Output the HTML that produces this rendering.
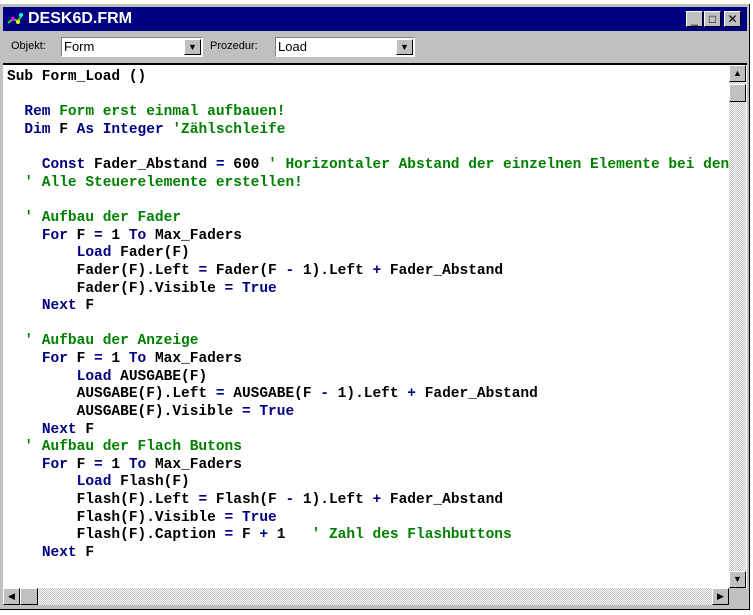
<!DOCTYPE html>
<html><head><meta charset="utf-8"><style>
body{margin:0;width:753px;height:615px;background:#fff;position:relative;overflow:hidden;font-family:"Liberation Sans",sans-serif}
.win{position:absolute;left:0;top:4px;width:750px;height:606px;background:#c0c0c0;border-right:1px solid #000;border-bottom:1px solid #000;box-sizing:border-box}
.title{position:absolute;left:3px;top:3px;width:744px;height:24px;background:#000080;color:#fff;font-weight:bold;font-size:16px;line-height:24px}
.title span{position:absolute;left:25px}
.btn{position:absolute;top:4px;width:17px;height:16px;background:#c0c0c0;border:1px solid;border-color:#fff #000 #000 #fff;box-sizing:border-box;color:#000;font-size:12px;line-height:14px;text-align:center;font-weight:normal}
.lbl{position:absolute;top:36px;font-size:11px;color:#000}
.combo{position:absolute;top:33px;height:20px;background:#fff;border:1px solid;border-color:#808080 #fff #fff #808080;box-sizing:border-box;font-size:13px;line-height:18px;padding-left:2px}
.combo .dd{position:absolute;right:1px;top:1px;width:17px;height:16px;background:#c0c0c0;border:1px solid;border-color:#fff #000 #000 #fff;box-sizing:border-box;font-size:9px;line-height:14px;text-align:center}
.code{position:absolute;left:3px;top:59px;width:744px;height:525px;background:#fff;border-top:2px solid #000;box-sizing:border-box}
pre{margin:0;position:absolute;left:4px;top:4px;font-family:"Liberation Mono",monospace;font-weight:bold;font-size:14.5px;line-height:17.63px;color:#000}
.k{color:#000080}.c{color:#008000}
.vs{position:absolute;left:729px;top:61px;width:17px;height:523px;background:repeating-conic-gradient(#c0c0c0 0 25%,#fff 0 50%) 0 0/2px 2px}
.hs{position:absolute;left:3px;top:584px;width:726px;height:17px;background:repeating-conic-gradient(#c0c0c0 0 25%,#fff 0 50%) 0 0/2px 2px}
.sb{position:absolute;width:17px;height:17px;background:#c0c0c0;border:1px solid;border-color:#fff #000 #000 #fff;box-sizing:border-box;font-size:9px;line-height:15px;text-align:center}
</style></head><body>
<div class="win">
<div class="title"><svg style="position:absolute;left:3px;top:4px" width="18" height="16"><path d="M2 12 L7 8 L12 10 L16 4" stroke="#0f0" stroke-width="2" fill="none"/><circle cx="7" cy="8" r="2" fill="#f0f"/><circle cx="12" cy="11" r="2" fill="#ff0"/><circle cx="15" cy="4" r="2" fill="#0ff"/></svg><span>DESK6D.FRM</span>
<div class="btn" style="left:683px">_</div><div class="btn" style="left:701px">□</div><div class="btn" style="left:721px">✕</div></div>
<div class="lbl" style="left:11px">Objekt:</div>
<div class="combo" style="left:61px;width:142px">Form<div class="dd">▼</div></div>
<div class="lbl" style="left:210px">Prozedur:</div>
<div class="combo" style="left:275px;width:140px">Load<div class="dd">▼</div></div>
<div class="code"><pre>Sub Form_Load ()

  <span class="k">Rem</span> <span class="c">Form erst einmal aufbauen!</span>
  <span class="k">Dim</span> F <span class="k">As</span> <span class="k">Integer</span> <span class="c">'Zählschleife</span>

    <span class="k">Const</span> Fader_Abstand <span class="k">=</span> 600 <span class="c">' Horizontaler Abstand der einzelnen Elemente bei den</span>
  <span class="c">' Alle Steuerelemente erstellen!</span>

  <span class="c">' Aufbau der Fader</span>
    <span class="k">For</span> F <span class="k">=</span> 1 <span class="k">To</span> Max_Faders
        <span class="k">Load</span> Fader(F)
        Fader(F).Left <span class="k">=</span> Fader(F <span class="k">-</span> 1).Left <span class="k">+</span> Fader_Abstand
        Fader(F).Visible <span class="k">=</span> <span class="k">True</span>
    <span class="k">Next</span> F

  <span class="c">' Aufbau der Anzeige</span>
    <span class="k">For</span> F <span class="k">=</span> 1 <span class="k">To</span> Max_Faders
        <span class="k">Load</span> AUSGABE(F)
        AUSGABE(F).Left <span class="k">=</span> AUSGABE(F <span class="k">-</span> 1).Left <span class="k">+</span> Fader_Abstand
        AUSGABE(F).Visible <span class="k">=</span> <span class="k">True</span>
    <span class="k">Next</span> F
  <span class="c">' Aufbau der Flach Butons</span>
    <span class="k">For</span> F <span class="k">=</span> 1 <span class="k">To</span> Max_Faders
        <span class="k">Load</span> Flash(F)
        Flash(F).Left <span class="k">=</span> Flash(F <span class="k">-</span> 1).Left <span class="k">+</span> Fader_Abstand
        Flash(F).Visible <span class="k">=</span> <span class="k">True</span>
        Flash(F).Caption <span class="k">=</span> F <span class="k">+</span> 1   <span class="c">' Zahl des Flashbuttons</span>
    <span class="k">Next</span> F
</pre></div>
<div class="vs"></div>
<div class="sb" style="left:729px;top:61px">▲</div>
<div class="sb" style="left:729px;top:80px;height:18px;font-size:0"></div>
<div class="sb" style="left:729px;top:567px">▼</div>
<div class="hs"></div>
<div class="sb" style="left:3px;top:584px">◀</div>
<div class="sb" style="left:20px;top:584px;width:18px;font-size:0"></div>
<div class="sb" style="left:712px;top:584px">▶</div>
<div style="position:absolute;left:729px;top:584px;width:17px;height:17px;background:#c0c0c0"></div>
</div>
</body></html>
